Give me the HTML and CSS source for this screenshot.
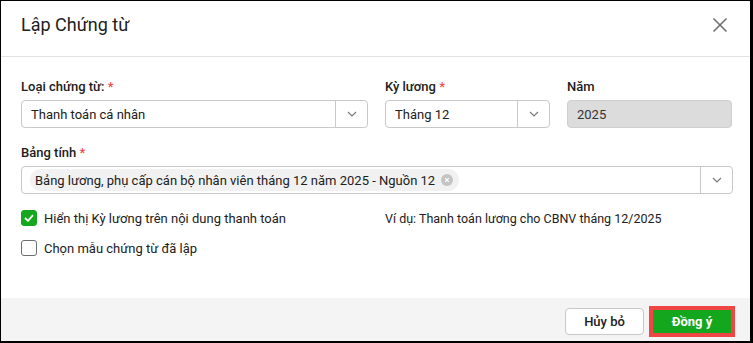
FILE: index.html
```html
<!DOCTYPE html>
<html lang="vi">
<head>
<meta charset="utf-8">
<title>Lập Chứng từ</title>
<link rel="stylesheet" href="styles.css">
</head>
<body>
<div class="frame">
  <div class="header">
    <div class="title">Lập Chứng từ</div>
    <button class="close" aria-label="Đóng">
      <svg width="16" height="16" viewBox="0 0 16 16"><path d="M1.5 1.5 L14.5 14.5 M14.5 1.5 L1.5 14.5" stroke="#6b6b6b" stroke-width="1.5" fill="none"/></svg>
    </button>
  </div>
  <div class="body">
    <div class="row-top">
      <div class="field">
        <div class="label">Loại chứng từ: <span class="req">*</span></div>
        <div class="select">
          <div class="value">Thanh toán cá nhân</div>
          <div class="arrow"><svg width="10" height="6" viewBox="0 0 10 6"><path d="M1 1 L5 5 L9 1" stroke="#7a7a7a" stroke-width="1.2" fill="none"/></svg></div>
        </div>
      </div>
      <div class="field">
        <div class="label">Kỳ lương <span class="req">*</span></div>
        <div class="select">
          <div class="value">Tháng 12</div>
          <div class="arrow"><svg width="10" height="6" viewBox="0 0 10 6"><path d="M1 1 L5 5 L9 1" stroke="#7a7a7a" stroke-width="1.2" fill="none"/></svg></div>
        </div>
      </div>
      <div class="field">
        <div class="label">Năm</div>
        <div class="input disabled">2025</div>
      </div>
    </div>
    <div class="field">
      <div class="label">Bảng tính <span class="req">*</span></div>
      <div class="select">
        <div class="value tags">
          <span class="chip">Bảng lương, phụ cấp cán bộ nhân viên tháng 12 năm 2025 - Nguồn 12
            <span class="chip-x"><svg width="12" height="12" viewBox="0 0 12 12"><circle cx="6" cy="6" r="6" fill="#c4c4c4"/><path d="M4.2 4.2 L7.8 7.8 M7.8 4.2 L4.2 7.8" stroke="#fff" stroke-width="1.2"/></svg></span>
          </span>
        </div>
        <div class="arrow"><svg width="10" height="6" viewBox="0 0 10 6"><path d="M1 1 L5 5 L9 1" stroke="#7a7a7a" stroke-width="1.2" fill="none"/></svg></div>
      </div>
    </div>
    <div class="checks">
      <label class="check">
        <span class="box checked"><svg width="10" height="8" viewBox="0 0 10 8"><path d="M1 4 L4 6.8 L9 1.2" stroke="#fff" stroke-width="1.8" fill="none"/></svg></span>
        Hiển thị Kỳ lương trên nội dung thanh toán
      </label>
      <div class="hint">Ví dụ: Thanh toán lương cho CBNV tháng 12/2025</div>
      <label class="check">
        <span class="box"></span>
        Chọn mẫu chứng từ đã lập
      </label>
    </div>
  </div>
  <div class="footer">
    <button class="btn btn-cancel">Hủy bỏ</button>
    <span class="highlight"><button class="btn btn-ok">Đồng ý</button></span>
  </div>
</div>
</body>
</html>
```

FILE: styles.css
```css
* { box-sizing: border-box; }
html, body {
  margin: 0;
  padding: 0;
  background: #fff;
}
body {
  font-family: Roboto, "Noto Sans", Arial, sans-serif;
  font-size: 13px;
  color: #212121;
}
.frame {
  width: 753px;
  height: 343px;
  border-top: 1px solid #000;
  border-left: 1px solid #000;
  border-right: 3px solid #000;
  border-bottom: 2px solid #000;
  display: flex;
  flex-direction: column;
  background: #fff;
}
.header {
  height: 56px;
  border-bottom: 1px solid #e3e3e3;
  display: flex;
  align-items: center;
  justify-content: space-between;
  padding: 0 22px 8px 20px;
}
.title {
  font-size: 18px;
  color: #212121;
}
.close {
  border: 0;
  background: none;
  padding: 0;
  width: 16px;
  height: 16px;
  display: flex;
}
.body {
  flex: 1;
  padding: 22px 17px 0 20px;
  display: flex;
  flex-direction: column;
}
.row-top {
  display: grid;
  grid-template-columns: 347px 165px 165px;
  column-gap: 17px;
  margin-bottom: 17px;
}
.label {
  font-weight: 500;
  line-height: 16px;
  margin-bottom: 5px;
  color: #212121;
}
.req { color: #f04b4b; }
.select {
  height: 28px;
  border: 1px solid #c9c9c9;
  border-radius: 4px;
  display: flex;
  align-items: stretch;
  background: #fff;
}
.value {
  flex: 1;
  display: flex;
  align-items: center;
  padding-left: 9px;
  min-width: 0;
}
.value.tags { padding-left: 8px; }
.arrow {
  width: 32px;
  border-left: 1px solid #c9c9c9;
  display: flex;
  align-items: center;
  justify-content: center;
}
.input {
  height: 28px;
  border: 1px solid #cfcfcf;
  border-radius: 4px;
  display: flex;
  align-items: center;
  padding-left: 9px;
}
.input.disabled {
  background: #dcdcdc;
  color: #333;
}
.chip {
  height: 22px;
  background: #f1f1f1;
  border-radius: 11px;
  display: inline-flex;
  align-items: center;
  padding: 0 6px 0 5px;
  gap: 6px;
  white-space: nowrap;
}
.chip-x { display: flex; }
.checks {
  margin-top: 14px;
  display: grid;
  grid-template-columns: 364px 1fr;
  row-gap: 10px;
  align-items: center;
}
.check {
  display: flex;
  align-items: center;
  gap: 7px;
  height: 20px;
}
.box {
  width: 16px;
  height: 16px;
  border: 1px solid #6e6e6e;
  border-radius: 3px;
  display: flex;
  align-items: center;
  justify-content: center;
  background: #fff;
}
.box.checked {
  background: #15a81f;
  border-color: #15a81f;
}
.hint {
  font-size: 12.5px;
  color: #212121;
}
.footer {
  height: 43px;
  background: #f4f4f4;
  display: flex;
  align-items: center;
  justify-content: flex-end;
  padding: 4px 15px 0 0;
  gap: 5px;
}
.btn {
  font-family: Roboto, "Noto Sans", Arial, sans-serif;
  font-size: 13px;
  font-weight: 500;
  border-radius: 4px;
  cursor: pointer;
}
.btn-cancel {
  width: 79px;
  height: 27px;
  background: #fff;
  border: 1px solid #c8c8c8;
  color: #212121;
}
.highlight {
  display: flex;
  border: 4px solid #f04545;
}
.btn-ok {
  width: 78px;
  height: 23px;
  background: #14a71e;
  border: 0;
  border-radius: 0;
  color: #fff;
  font-weight: 700;
}
```
